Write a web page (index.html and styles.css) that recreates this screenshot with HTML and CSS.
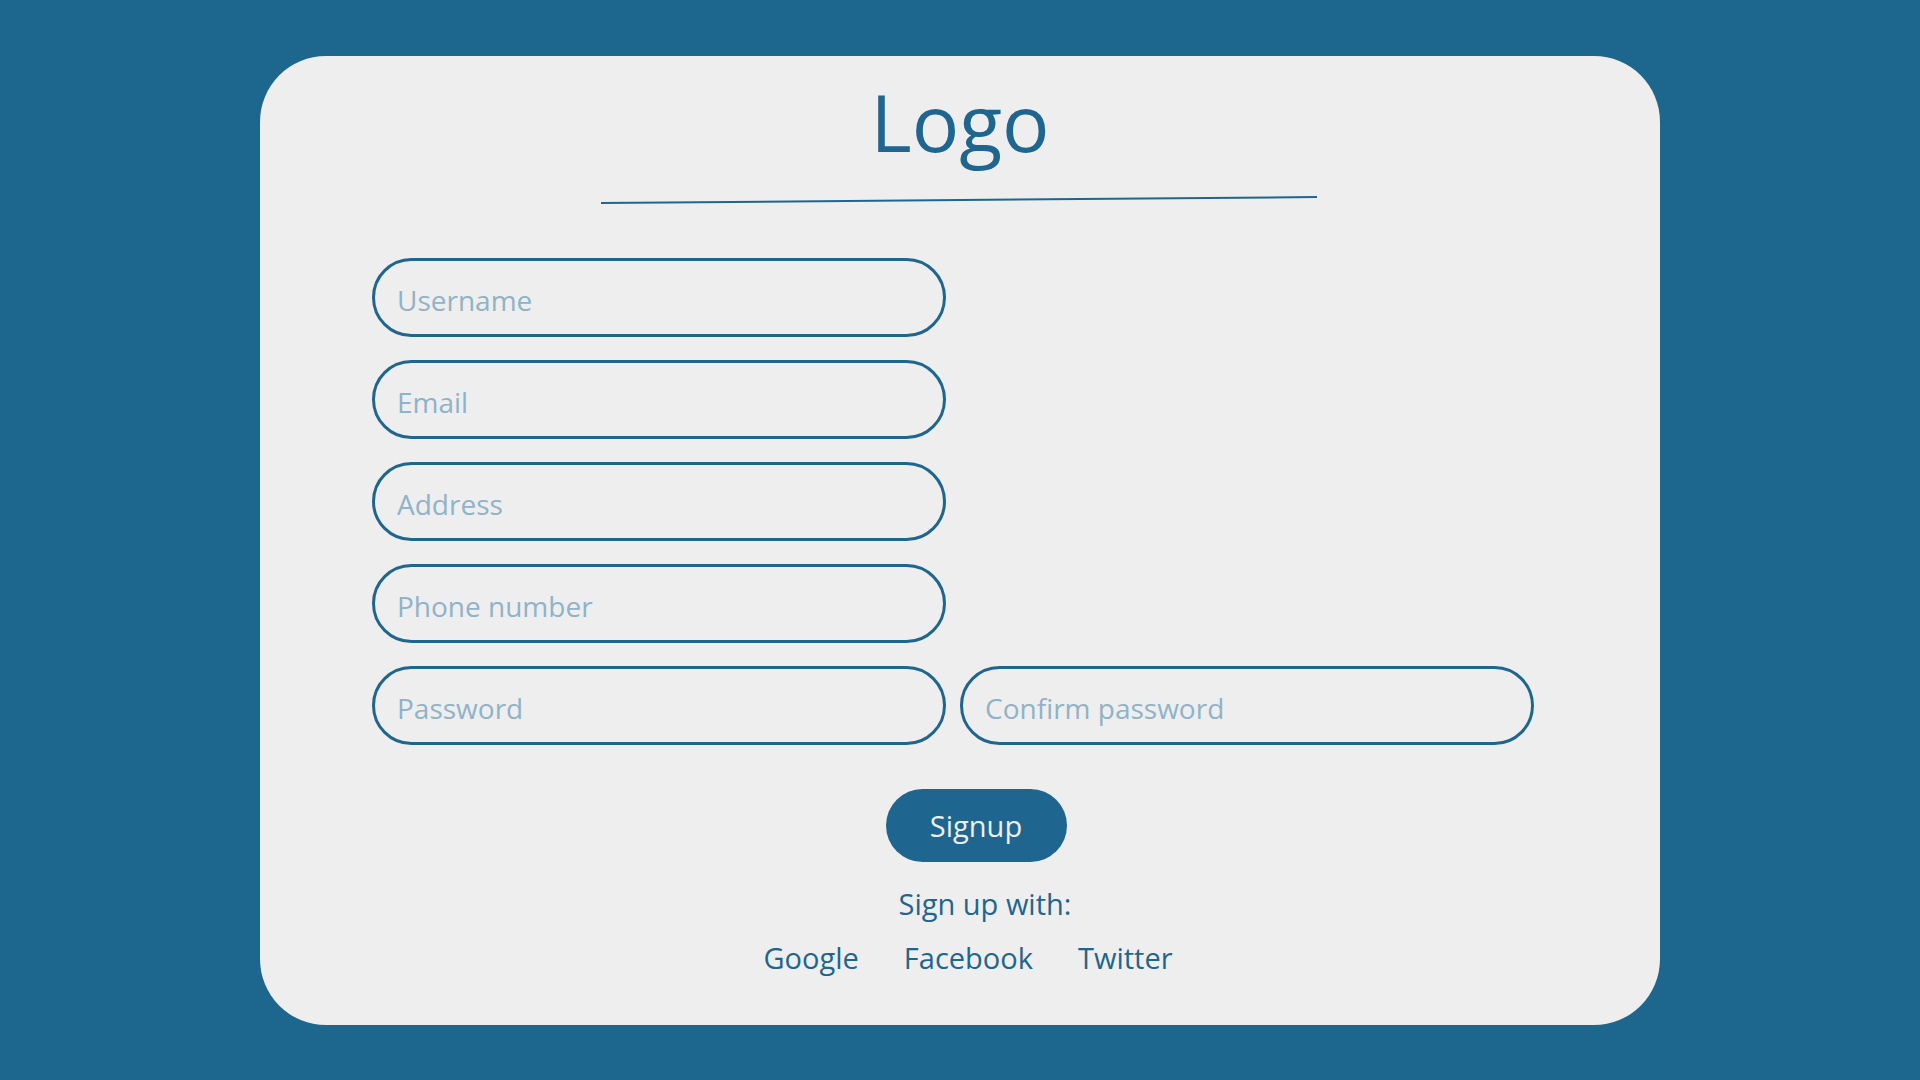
FILE: index.html
```html
<!DOCTYPE html>
<html lang="en">
<head>
<meta charset="utf-8">
<title>Signup</title>
<link rel="stylesheet" href="styles.css">
</head>
<body>
<main class="card">
  <h1 class="logo">Logo</h1>
  <div class="divider"></div>
  <form class="form">
    <div class="row"><input class="field" type="text" placeholder="Username"></div>
    <div class="row"><input class="field" type="email" placeholder="Email"></div>
    <div class="row"><input class="field" type="text" placeholder="Address"></div>
    <div class="row"><input class="field" type="tel" placeholder="Phone number"></div>
    <div class="row">
      <input class="field" type="password" placeholder="Password">
      <input class="field" type="password" placeholder="Confirm password">
    </div>
    <div class="actions">
      <button class="btn" type="button">Signup</button>
      <p class="with">Sign up with:</p>
      <div class="links">
        <a href="#">Google</a>
        <a href="#">Facebook</a>
        <a href="#">Twitter</a>
      </div>
    </div>
  </form>
</main>
</body>
</html>
```
FILE: styles.css
```css
* { box-sizing: border-box; }
html, body { margin: 0; padding: 0; }
body {
  background: #1d668e;
  font-family: "Open Sans", "Noto Sans", sans-serif;
  color: #1e6690;
  padding: 56px 0 55px;
}
.card {
  width: 1400px;
  height: 969px;
  margin: 0 auto;
  background: #eeeeee;
  border-radius: 66px;
  padding: 26px 0 0 112px;
  display: flex;
  flex-direction: column;
}
.logo {
  margin: 0;
  margin-left: -112px;
  text-align: center;
  font-weight: 400;
  font-size: 79px;
  line-height: 80px;
  color: #1e6690;
}
.divider {
  width: 716px;
  height: 2px;
  background: #1e6690;
  margin: 37px 0 0 229px;
  transform: rotate(-0.48deg);
}
.form {
  margin-top: 57px;
  display: flex;
  flex-direction: column;
  gap: 23px;
}
.row {
  display: flex;
  gap: 14px;
}
.field {
  width: 574px;
  height: 79px;
  border: 3px solid #1e6690;
  border-radius: 40px;
  background: transparent;
  padding: 5px 22px 0;
  font-family: "Open Sans", "Noto Sans", sans-serif;
  font-size: 28px;
  color: #1e6690;
  outline: none;
}
.field::placeholder {
  color: #8fb3c8;
  opacity: 1;
}
.actions {
  display: flex;
  flex-direction: column;
  align-items: center;
  width: 1208px;
  margin-top: 21px;
}
.btn {
  width: 181px;
  height: 73px;
  border: none;
  border-radius: 37px;
  background: #1e6690;
  color: #eeeeee;
  font-family: "Open Sans", "Noto Sans", sans-serif;
  font-size: 29px;
  padding: 0;
}
.with {
  margin: 22px 0 0 18px;
  font-size: 29px;
  line-height: 40px;
}
.links {
  display: flex;
  gap: 45px;
  margin-top: 14px;
  margin-left: 4px;
  margin-right: 20px;
}
.links a {
  color: #1e6690;
  text-decoration: none;
  font-size: 29px;
  line-height: 40px;
}
```
